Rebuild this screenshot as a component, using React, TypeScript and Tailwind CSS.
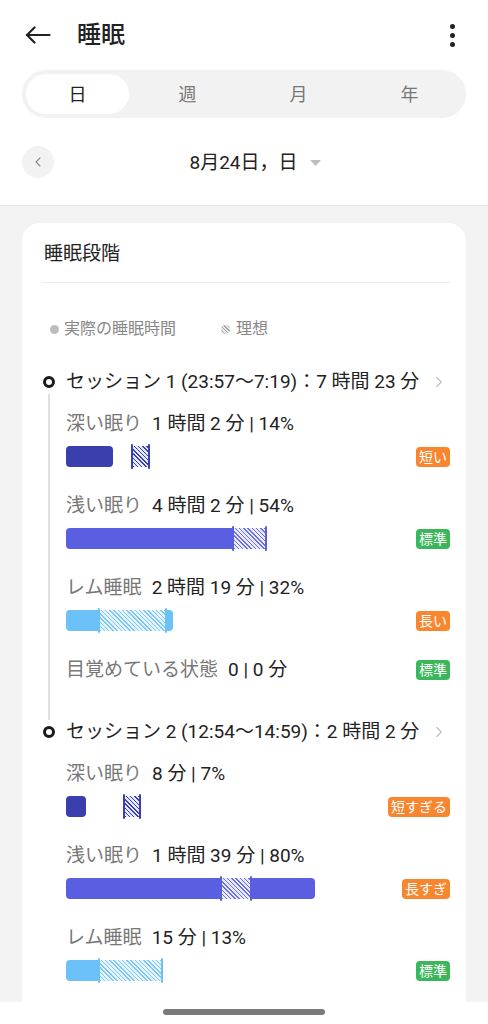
import { ChevronLeft, ChevronRight } from 'lucide-react';

type Tone = 'deep' | 'light' | 'rem';
type Seg = { t: 'solid' | 'hatch' | 'mark' | 'gap'; w?: number; r?: 'l' | 'r' | 'all' };

const solidCls: Record<Tone, string> = {
  deep: 'bg-[#3b3fae]',
  light: 'bg-[#5a5fe2]',
  rem: 'bg-[#6cc2f8]',
};

const hatchCls: Record<Tone, string> = {
  deep: 'bg-[repeating-linear-gradient(45deg,#3b3fae_0px,#3b3fae_1px,#e6e7f7_1px,#e6e7f7_3px)]',
  light: 'bg-[repeating-linear-gradient(45deg,#6a6fe6_0px,#6a6fe6_1px,#e9eafc_1px,#e9eafc_3px)]',
  rem: 'bg-[repeating-linear-gradient(45deg,#7cc9f9_0px,#7cc9f9_1px,#e6f4fe_1px,#e6f4fe_3px)]',
};

const markCls: Record<Tone, string> = {
  deep: 'bg-[#3b3fae]',
  light: 'bg-[#5a5fe2]',
  rem: 'bg-[#6cc2f8]',
};

function Bar({ tone, segs }: { tone: Tone; segs: Seg[] }) {
  return (
    <div className="flex h-[25px] items-center">
      {segs.map((s, i) => {
        if (s.t === 'gap') return <div key={i} style={{ width: s.w }} />;
        if (s.t === 'mark')
          return <div key={i} className={`h-[25px] w-[2px] shrink-0 rounded-full ${markCls[tone]}`} />;
        const round =
          s.r === 'all' ? 'rounded-[4px]' : s.r === 'l' ? 'rounded-l-[4px]' : s.r === 'r' ? 'rounded-r-[4px]' : '';
        return (
          <div
            key={i}
            className={`h-[21px] shrink-0 ${s.t === 'solid' ? solidCls[tone] : hatchCls[tone]} ${round}`}
            style={{ width: s.w }}
          />
        );
      })}
    </div>
  );
}

function Badge({ text, color }: { text: string; color: 'orange' | 'green' }) {
  return (
    <span
      className={`inline-flex h-[20px] items-center rounded-[4px] px-[3px] text-[14px] leading-none text-white ${
        color === 'orange' ? 'bg-[#f7862f]' : 'bg-[#3cb65b]'
      }`}
    >
      {text}
    </span>
  );
}

function Stage({
  label,
  value,
  tone,
  segs,
  badge,
  first,
}: {
  label: string;
  value: string;
  tone: Tone;
  segs: Seg[];
  badge: { text: string; color: 'orange' | 'green' };
  first?: boolean;
}) {
  return (
    <div className={first ? 'mt-[18px]' : 'mt-[25px]'}>
      <div className="text-[19px] leading-[24px]">
        <span className="text-[#777]">{label}</span>
        <span className="ml-[10px] text-[#222]">{value}</span>
      </div>
      <div className="mt-[8px] flex items-center justify-between">
        <Bar tone={tone} segs={segs} />
        <Badge {...badge} />
      </div>
    </div>
  );
}

function SessionHead({ text }: { text: string }) {
  return (
    <div className="flex h-[24px] items-center justify-between pr-[2px]">
      <span className="text-[19px] leading-[24px] text-[#222]">{text}</span>
      <ChevronRight size={18} strokeWidth={1.5} className="text-[#bdbdbd]" />
    </div>
  );
}

function Dot() {
  return <span className="h-[12px] w-[12px] rounded-full border-[3px] border-[#1a1a1a]" />;
}

export default function App() {
  return (
    <div className="flex h-[1024px] w-[488px] flex-col overflow-hidden bg-white font-[Roboto,'Noto_Sans_CJK_JP',sans-serif]">
      {/* header */}
      <div className="flex h-[70px] shrink-0 items-center pl-[25px] pr-[33px]">
        <svg width="26" height="18" viewBox="0 0 26 18" fill="none" stroke="#222" strokeWidth="2.2" strokeLinecap="round" strokeLinejoin="round">
          <path d="M24.5 9H2" />
          <path d="M9.5 1.5L2 9l7.5 7.5" />
        </svg>
        <h1 className="ml-[26px] flex-1 text-[24px] font-medium leading-none text-[#222]">睡眠</h1>
        <div className="flex flex-col gap-[4px]">
          <span className="h-[5px] w-[5px] rounded-full bg-[#222]" />
          <span className="h-[5px] w-[5px] rounded-full bg-[#222]" />
          <span className="h-[5px] w-[5px] rounded-full bg-[#222]" />
        </div>
      </div>

      {/* tabs */}
      <div className="mx-[22px] flex h-[48px] shrink-0 items-center rounded-full bg-[#f2f2f2] p-[4px] text-[18px]">
        <div className="flex h-[40px] w-[103px] items-center justify-center rounded-full bg-white text-[#222]">日</div>
        <div className="flex flex-1 justify-center pl-[6px] text-[#777]">週</div>
        <div className="flex flex-1 justify-center pl-[6px] text-[#777]">月</div>
        <div className="flex flex-1 justify-center pl-[6px] text-[#777]">年</div>
      </div>

      {/* date row */}
      <div className="mt-[28px] flex h-[32px] shrink-0 items-center px-[22px]">
        <div className="flex h-[32px] w-[32px] items-center justify-center rounded-full bg-[#f2f2f2]">
          <ChevronLeft size={16} strokeWidth={1.6} className="text-[#888]" />
        </div>
        <div className="flex flex-1 items-center justify-center pt-[2px]">
          <span className="w-[22px]" />
          <span className="text-[19px] text-[#222]">8月24日，日</span>
          <svg className="ml-[12px]" width="11" height="6" viewBox="0 0 11 6">
            <path d="M0 0h11L5.5 6z" fill="#bdbdbd" />
          </svg>
        </div>
        <span className="w-[32px]" />
      </div>

      {/* gray content area */}
      <div className="mt-[27px] flex-1 overflow-hidden border-t border-[#e6e6e6] bg-[#f3f3f3] px-[22px] pt-[17px]">
        <div className="h-[800px] rounded-[18px] bg-white pl-[20px] pr-[16px] pt-[19px]">
          <div className="pl-[2px] text-[19px] leading-[24px] text-[#222]">睡眠段階</div>
          <div className="mt-[16px] h-px bg-[#ececec]" />

          {/* legend */}
          <div className="mt-[36px] flex h-[20px] items-center pl-[8px] text-[16px] text-[#888]">
            <span className="h-[9px] w-[9px] rounded-full bg-[#bdbdbd]" />
            <span className="ml-[5px]">実際の睡眠時間</span>
            <span className="ml-[45px] h-[9px] w-[9px] rounded-full bg-[repeating-linear-gradient(45deg,#a8a8a8_0px,#a8a8a8_1px,#e6e6e6_1px,#e6e6e6_2.5px)]" />
            <span className="ml-[6px]">理想</span>
          </div>

          {/* session 1 */}
          <div className="mt-[31px] flex gap-[10px]">
            <div className="flex w-[14px] flex-col items-center">
              <div className="flex h-[24px] items-center">
                <Dot />
              </div>
              <div className="w-[2px] flex-1 bg-[#e0e0e0]" />
            </div>
            <div className="flex-1 pb-[38px]">
              <SessionHead text="セッション 1 (23:57～7:19)：7 時間 23 分" />
              <Stage
                first
                label="深い眠り"
                value="1 時間 2 分 | 14%"
                tone="deep"
                segs={[
                  { t: 'solid', w: 47, r: 'all' },
                  { t: 'gap', w: 18 },
                  { t: 'mark' },
                  { t: 'hatch', w: 15 },
                  { t: 'mark' },
                ]}
                badge={{ text: '短い', color: 'orange' }}
              />
              <Stage
                label="浅い眠り"
                value="4 時間 2 分 | 54%"
                tone="light"
                segs={[
                  { t: 'solid', w: 166, r: 'l' },
                  { t: 'mark' },
                  { t: 'hatch', w: 31 },
                  { t: 'mark' },
                ]}
                badge={{ text: '標準', color: 'green' }}
              />
              <Stage
                label="レム睡眠"
                value="2 時間 19 分 | 32%"
                tone="rem"
                segs={[
                  { t: 'solid', w: 32, r: 'l' },
                  { t: 'mark' },
                  { t: 'hatch', w: 65 },
                  { t: 'mark' },
                  { t: 'solid', w: 6, r: 'r' },
                ]}
                badge={{ text: '長い', color: 'orange' }}
              />
              <div className="mt-[25px] flex h-[24px] items-center justify-between">
                <div className="text-[19px] leading-[24px]">
                  <span className="text-[#777]">目覚めている状態</span>
                  <span className="ml-[10px] text-[#222]">0 | 0 分</span>
                </div>
                <Badge text="標準" color="green" />
              </div>
            </div>
          </div>

          {/* session 2 */}
          <div className="flex gap-[10px]">
            <div className="flex w-[14px] flex-col items-center">
              <div className="flex h-[24px] items-center">
                <Dot />
              </div>
            </div>
            <div className="flex-1">
              <SessionHead text="セッション 2 (12:54～14:59)：2 時間 2 分" />
              <Stage
                first
                label="深い眠り"
                value="8 分 | 7%"
                tone="deep"
                segs={[
                  { t: 'solid', w: 20, r: 'all' },
                  { t: 'gap', w: 37 },
                  { t: 'mark' },
                  { t: 'hatch', w: 14 },
                  { t: 'mark' },
                ]}
                badge={{ text: '短すぎる', color: 'orange' }}
              />
              <Stage
                label="浅い眠り"
                value="1 時間 39 分 | 80%"
                tone="light"
                segs={[
                  { t: 'solid', w: 154, r: 'l' },
                  { t: 'mark' },
                  { t: 'hatch', w: 28 },
                  { t: 'mark' },
                  { t: 'solid', w: 63, r: 'r' },
                ]}
                badge={{ text: '長すぎ', color: 'orange' }}
              />
              <Stage
                label="レム睡眠"
                value="15 分 | 13%"
                tone="rem"
                segs={[
                  { t: 'solid', w: 32, r: 'l' },
                  { t: 'mark' },
                  { t: 'hatch', w: 61 },
                  { t: 'mark' },
                ]}
                badge={{ text: '標準', color: 'green' }}
              />
            </div>
          </div>
        </div>
      </div>

      {/* nav bar */}
      <div className="flex h-[22px] shrink-0 justify-center bg-white pt-[7px]">
        <span className="h-[6px] w-[162px] rounded-full bg-[#7a7a7a]" />
      </div>
    </div>
  );
}
